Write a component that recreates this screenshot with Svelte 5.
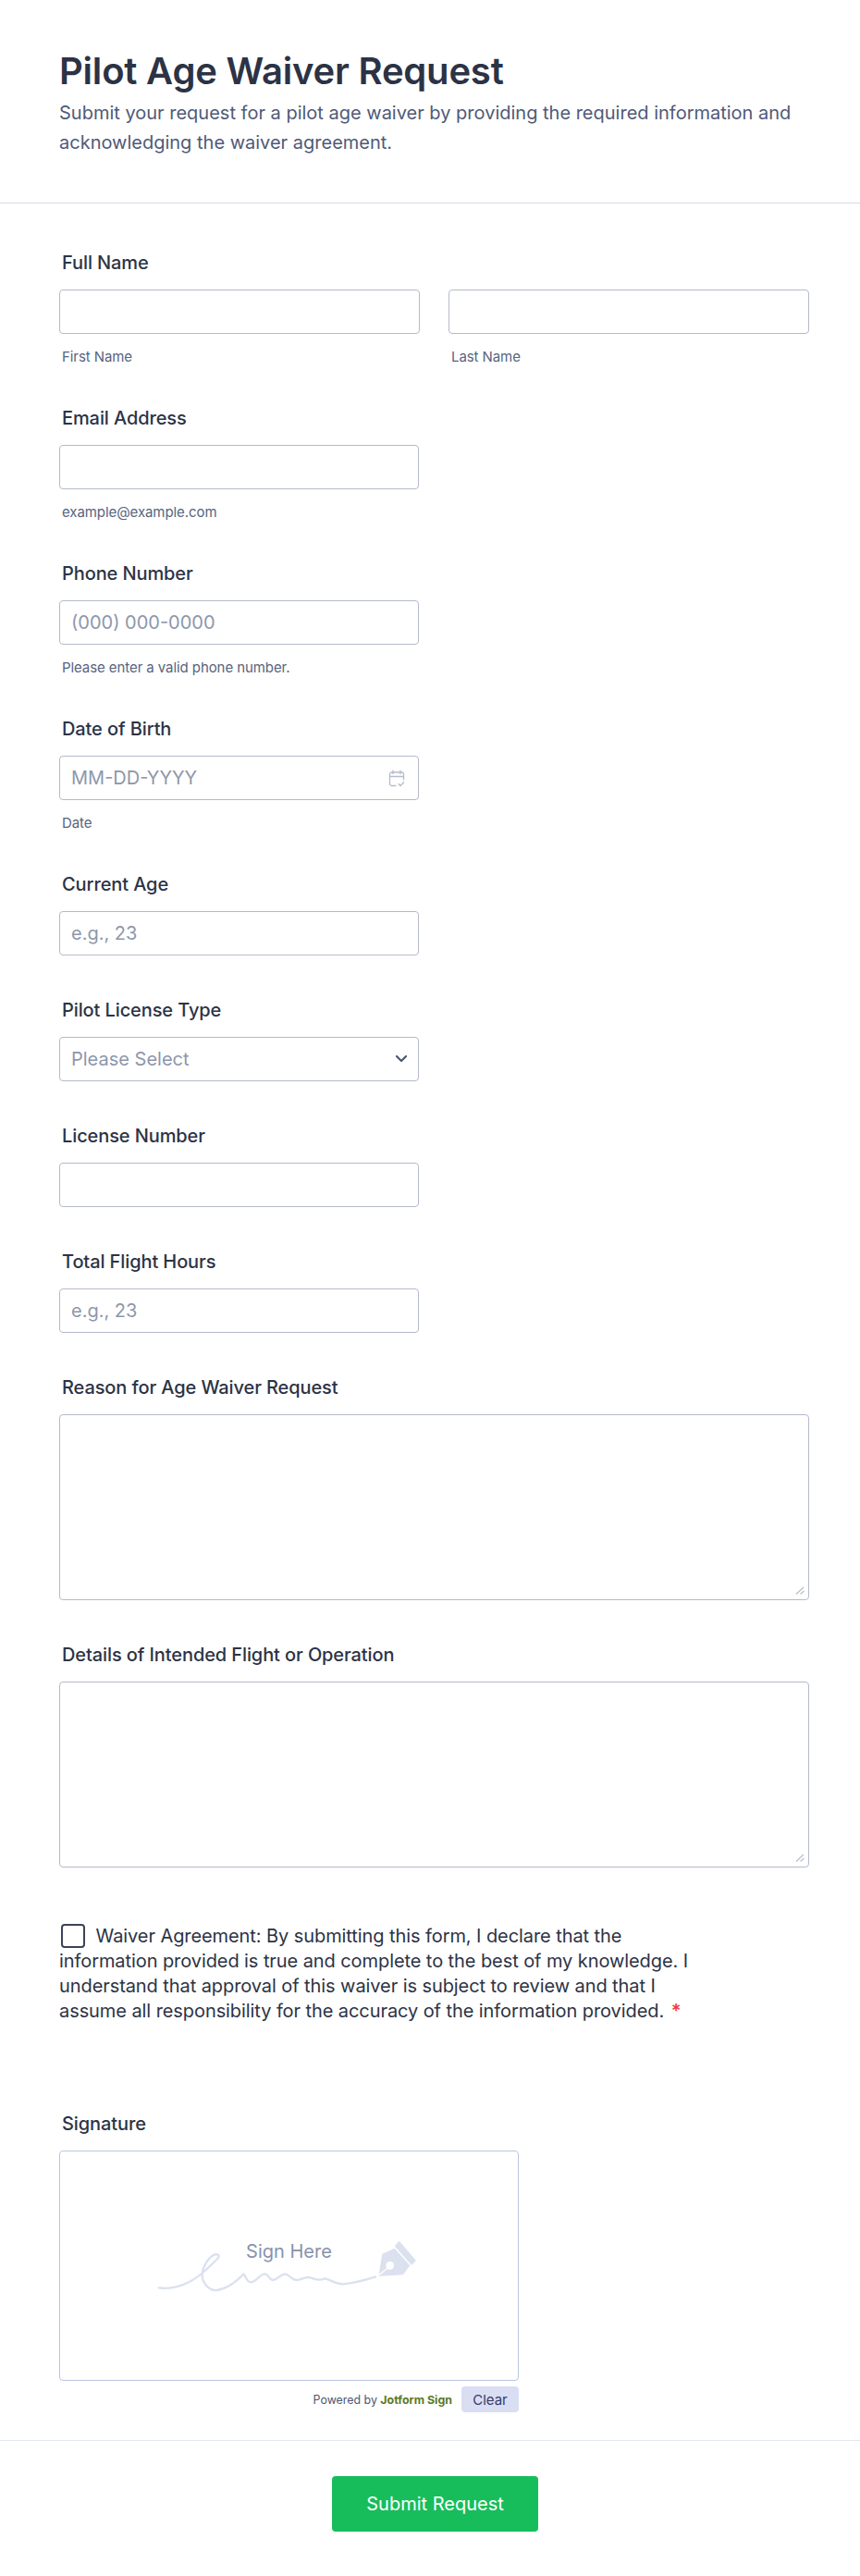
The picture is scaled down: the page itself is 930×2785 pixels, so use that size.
<script lang="ts">
	const plainFields = [
		{ label: 'Current Age', placeholder: 'e.g., 23' }
	];
</script>

<div class="page">
	<header class="head">
		<h1>Pilot Age Waiver Request</h1>
		<p>Submit your request for a pilot age waiver by providing the required information and acknowledging the waiver agreement.</p>
	</header>

	<form class="form" onsubmit={(e) => e.preventDefault()}>
		<div class="field">
			<label class="label" for="first">Full Name</label>
			<div class="name-row">
				<div>
					<input id="first" class="input" type="text" />
					<div class="sub">First Name</div>
				</div>
				<div>
					<input class="input" type="text" aria-label="Last Name" />
					<div class="sub">Last Name</div>
				</div>
			</div>
		</div>

		<div class="field half">
			<label class="label" for="email">Email Address</label>
			<input id="email" class="input" type="email" />
			<div class="sub">example@example.com</div>
		</div>

		<div class="field half">
			<label class="label" for="phone">Phone Number</label>
			<input id="phone" class="input" type="tel" placeholder="(000) 000-0000" />
			<div class="sub">Please enter a valid phone number.</div>
		</div>

		<div class="field half">
			<label class="label" for="dob">Date of Birth</label>
			<div class="with-icon">
				<input id="dob" class="input" type="text" placeholder="MM-DD-YYYY" />
				<svg class="cal" width="18" height="19" viewBox="0 0 18 19" fill="none" stroke="#b5bccb" stroke-width="1.3" stroke-linecap="round" stroke-linejoin="round">
					<path d="M8 17.5H3.5a2 2 0 0 1-2-2V5a2 2 0 0 1 2-2h11a2 2 0 0 1 2 2v6" />
					<path d="M1.5 7.5h15M5 1v3.5M13 1v3.5" />
					<path d="M11 15.5l2 2 3.5-3.5" />
				</svg>
			</div>
			<div class="sub">Date</div>
		</div>

		{#each plainFields as f}
			<div class="field half">
				<label class="label" for="age">{f.label}</label>
				<input id="age" class="input" type="text" placeholder={f.placeholder} />
			</div>
		{/each}

		<div class="field half">
			<label class="label" for="license">Pilot License Type</label>
			<div class="with-icon">
				<select id="license" class="input select">
					<option>Please Select</option>
				</select>
				<svg class="chev" width="14" height="9" viewBox="0 0 14 9" fill="none" stroke="#4c5770" stroke-width="2.2" stroke-linecap="round" stroke-linejoin="round">
					<path d="M2 2l5 5 5-5" />
				</svg>
			</div>
		</div>

		<div class="field half">
			<label class="label" for="number">License Number</label>
			<input id="number" class="input" type="text" />
		</div>

		<div class="field half">
			<label class="label" for="hours">Total Flight Hours</label>
			<input id="hours" class="input" type="text" placeholder="e.g., 23" />
		</div>

		<div class="field">
			<label class="label" for="reason">Reason for Age Waiver Request</label>
			<div class="with-icon">
				<textarea id="reason" class="input area"></textarea>
				<svg class="grip" width="10" height="9" viewBox="0 0 10 9" stroke="#b8bdc9" stroke-width="1.2"><path d="M1 8.5L9 1M5.5 8.5L9.5 5" /></svg>
			</div>
		</div>

		<div class="field">
			<label class="label" for="details">Details of Intended Flight or Operation</label>
			<div class="with-icon">
				<textarea id="details" class="input area"></textarea>
				<svg class="grip" width="10" height="9" viewBox="0 0 10 9" stroke="#b8bdc9" stroke-width="1.2"><path d="M1 8.5L9 1M5.5 8.5L9.5 5" /></svg>
			</div>
		</div>

		<div class="agree">
			<span class="box"></span>
			Waiver Agreement: By submitting this form, I declare that the information provided is true and complete to the best of my knowledge. I understand that approval of this waiver is subject to review and that I assume all responsibility for the accuracy of the information provided.
			<span class="req">*</span>
		</div>

		<div class="field sign">
			<div class="label">Signature</div>
			<div class="pad">
				<span class="sign-here">Sign Here</span>
				<svg class="scribble" width="360" height="130" viewBox="0 0 1080 390" fill="none">
					<path d="M125 280 C180 288 235 262 275 225 C300 200 328 180 318 173 C300 165 270 200 266 235 C264 265 290 292 315 288 C350 282 382 255 400 236 C408 240 408 263 425 262 C445 258 452 236 470 235 C484 238 482 256 497 255 C512 252 522 234 537 236 C552 240 558 258 577 255 C595 250 602 244 617 247 C632 252 645 258 665 250 C685 255 695 268 725 268 C760 265 795 255 828 245" stroke="#dce1f0" stroke-width="7" stroke-linecap="round" />
					<path d="M905 128 L960 192 L945 207 L890 145 Z" fill="#dce1f0" />
					<path d="M850 170 L890 152 L940 208 L918 238 L838 243 Z" fill="#dce1f0" />
					<circle cx="875" cy="208" r="13" fill="#fff" />
					<path d="M868 216 L834 243" stroke="#fff" stroke-width="4" />
				</svg>
			</div>
			<div class="pad-foot">
				<span class="powered">Powered by <b>Jotform Sign</b></span>
				<button class="clear" type="button">Clear</button>
			</div>
		</div>

		<div class="actions">
			<button class="submit" type="submit">Submit Request</button>
		</div>
	</form>
</div>

<style>
	:global(body) {
		margin: 0;
		background: #fff;
		color: #2c3345;
		font-family: Inter, 'Liberation Sans', sans-serif;
	}

	.page {
		width: 930px;
		height: 2785px;
		overflow: hidden;
	}

	.head {
		padding: 50px 64px 49px;
		border-bottom: 1px solid #d8dae5;
	}

	h1 {
		margin: 0;
		font-size: 40px;
		line-height: 54px;
		font-weight: 600;
		letter-spacing: -0.2px;
		color: #2c3345;
	}

	.head p {
		margin: 2px 0 0;
		font-size: 20px;
		line-height: 32px;
		color: #4f5a77;
	}

	.form {
		padding: 50px 0 0;
	}

	.field {
		padding: 0 55px 45px 64px;
	}

	.field.half {
		width: 389px;
		padding-right: 0;
	}

	.label {
		display: block;
		padding-left: 3px;
		margin-bottom: 15px;
		font-size: 20px;
		line-height: 28px;
		font-weight: 500;
		letter-spacing: -0.1px;
		color: #2c3345;
	}

	.name-row {
		display: grid;
		grid-template-columns: 390px 390px;
		gap: 31px;
	}

	.input {
		display: block;
		width: 100%;
		height: 48px;
		box-sizing: border-box;
		padding: 0 12px;
		border: 1px solid #b5b9cc;
		border-radius: 4px;
		background: #fff;
		font-family: inherit;
		font-size: 20px;
		color: #2c3345;
		outline: none;
	}

	.input::placeholder {
		color: #8d97ab;
		opacity: 1;
	}

	.select {
		appearance: none;
		color: #8d97ab;
	}

	.with-icon {
		position: relative;
	}

	.cal {
		position: absolute;
		right: 15px;
		top: 15px;
	}

	.chev {
		position: absolute;
		right: 12px;
		top: 19px;
	}

	.grip {
		position: absolute;
		right: 5px;
		bottom: 6px;
		pointer-events: none;
	}

	.sub {
		margin-top: 18px;
		padding-left: 3px;
		font-size: 15px;
		line-height: 14px;
		letter-spacing: -0.08px;
		color: #57647e;
	}

	.area {
		height: 201px;
		padding: 10px 12px;
		resize: none;
	}

	.agree {
		width: 690px;
		margin: 16px 0 0 64px;
		font-size: 20px;
		line-height: 27px;
		letter-spacing: -0.08px;
		color: #2c3345;
	}

	.box {
		display: inline-block;
		box-sizing: border-box;
		width: 26px;
		height: 26px;
		margin: 0 6px 0 2px;
		border: 2px solid #3b4358;
		border-radius: 4px;
		vertical-align: -6px;
	}

	.req {
		margin-left: 2px;
		color: #f23a3c;
		font-weight: 600;
	}

	.sign {
		margin-top: 94px;
		padding-bottom: 0;
	}

	.pad {
		position: relative;
		box-sizing: border-box;
		width: 497px;
		height: 249px;
		border: 1px solid #b8c6e0;
		border-radius: 4px;
	}

	.sign-here {
		position: absolute;
		left: 0;
		right: 0;
		top: 95px;
		text-align: center;
		font-size: 20px;
		line-height: 26px;
		color: #8792ac;
	}

	.scribble {
		position: absolute;
		left: 65px;
		top: 54px;
	}

	.pad-foot {
		display: flex;
		align-items: center;
		justify-content: flex-end;
		gap: 10px;
		width: 497px;
		margin-top: 6px;
	}

	.powered {
		font-size: 12.4px;
		color: #4c5770;
	}

	.powered b {
		font-weight: 700;
		color: #5a7a1e;
	}

	.clear {
		width: 62px;
		height: 28px;
		padding: 0;
		border: 0;
		border-radius: 4px;
		background: #dadef3;
		font-family: inherit;
		font-size: 15px;
		color: #343c6a;
	}

	.actions {
		display: flex;
		justify-content: center;
		margin-top: 30px;
		padding: 38px 0 0 11px;
		border-top: 1px solid #e3e8f0;
	}

	.submit {
		width: 223px;
		height: 60px;
		border: 0;
		border-radius: 4px;
		background: #18bd5b;
		font-family: inherit;
		font-size: 20px;
		font-weight: 400;
		color: #fff;
	}
</style>
